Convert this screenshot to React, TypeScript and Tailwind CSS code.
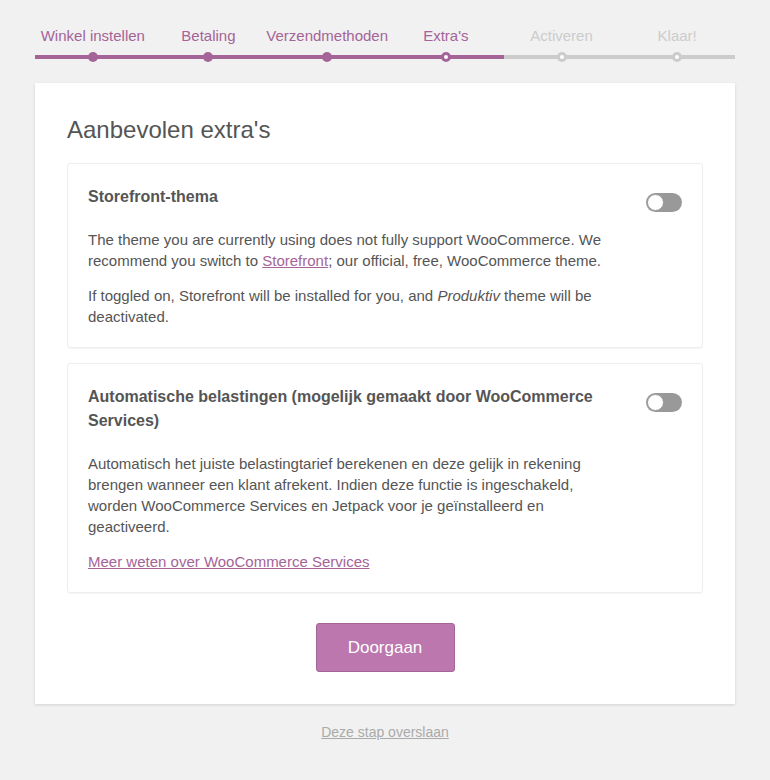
const steps = [
  { label: "Winkel instellen", state: "done" },
  { label: "Betaling", state: "done" },
  { label: "Verzendmethoden", state: "done" },
  { label: "Extra's", state: "active" },
  { label: "Activeren", state: "todo" },
  { label: "Klaar!", state: "todo" },
];

function Steps() {
  return (
    <ol className="mx-[35px] flex pt-[25px]">
      {steps.map((step) => {
        const reached = step.state !== "todo";
        return (
          <li
            key={step.label}
            className={
              reached
                ? "relative flex-1 border-b-4 border-[#a46497] pb-[8px] text-center text-[15px] leading-[22px] text-[#a46497]"
                : "relative flex-1 border-b-4 border-[#cccccc] pb-[8px] text-center text-[15px] leading-[22px] text-[#cccccc]"
            }
          >
            {step.label}
            {step.state === "done" && (
              <span className="absolute -bottom-[7px] left-1/2 -ml-[5px] h-[10px] w-[10px] rounded-full bg-[#a46497]" />
            )}
            {step.state === "active" && (
              <span className="absolute -bottom-[7px] left-1/2 -ml-[5px] h-[10px] w-[10px] rounded-full border-[3px] border-[#a46497] bg-white" />
            )}
            {step.state === "todo" && (
              <span className="absolute -bottom-[7px] left-1/2 -ml-[5px] h-[10px] w-[10px] rounded-full border-[3px] border-[#cccccc] bg-white" />
            )}
          </li>
        );
      })}
    </ol>
  );
}

function Toggle() {
  return (
    <span className="mt-[8px] flex h-[19px] w-[36px] shrink-0 items-center rounded-full bg-[#999999] px-[1px]">
      <span className="h-[17px] w-[17px] rounded-full border border-[#999999] bg-white" />
    </span>
  );
}

function Extra({ title, children }: { title: string; children: React.ReactNode }) {
  return (
    <div className="flex gap-[38px] rounded-[3px] border border-[#eeeeee] px-[20px] pb-[20px] pt-[21px] shadow-[0_1px_1px_rgba(0,0,0,0.04)]">
      <div className="flex-1">
        <h2 className="text-[16px] font-bold leading-[24px] text-[#555555]">{title}</h2>
        <div className="mt-[20px] flex flex-col gap-[14px] text-[15px] leading-[21px] text-[#555555]">
          {children}
        </div>
      </div>
      <Toggle />
    </div>
  );
}

export default function App() {
  return (
    <div className="min-h-[780px] bg-[#f1f1f1] font-['Liberation_Sans',Arial,sans-serif]">
      <Steps />
      <main className="mx-[35px] mt-[24px] bg-white px-[32px] pb-[32px] pt-[32px] shadow-[0_1px_3px_rgba(0,0,0,0.13)]">
        <h1 className="mb-[19px] text-[24px] leading-[29px] text-[#555555]">Aanbevolen extra's</h1>
        <div className="flex flex-col gap-[15px]">
          <Extra title="Storefront-thema">
            <p>
              The theme you are currently using does not fully support WooCommerce. We recommend you switch to{" "}
              <a href="#" className="text-[#a46497] underline">Storefront</a>; our official, free, WooCommerce theme.
            </p>
            <p>
              If toggled on, Storefront will be installed for you, and <em>Produktiv</em> theme will be deactivated.
            </p>
          </Extra>
          <Extra title="Automatische belastingen (mogelijk gemaakt door WooCommerce Services)">
            <p>
              Automatisch het juiste belastingtarief berekenen en deze gelijk in rekening brengen wanneer een klant
              afrekent. Indien deze functie is ingeschakeld, worden WooCommerce Services en Jetpack voor je
              geïnstalleerd en geactiveerd.
            </p>
            <p>
              <a href="#" className="text-[#a46497] underline">Meer weten over WooCommerce Services</a>
            </p>
          </Extra>
        </div>
        <div className="mt-[30px] flex justify-center">
          <button className="h-[49px] w-[139px] rounded-[3px] border border-[#a36597] bg-[#bb77ae] text-[17px] text-white">
            Doorgaan
          </button>
        </div>
      </main>
      <p className="mt-[19px] text-center text-[14px] leading-[18px]">
        <a href="#" className="text-[#aaaaaa] underline">Deze stap overslaan</a>
      </p>
    </div>
  );
}
